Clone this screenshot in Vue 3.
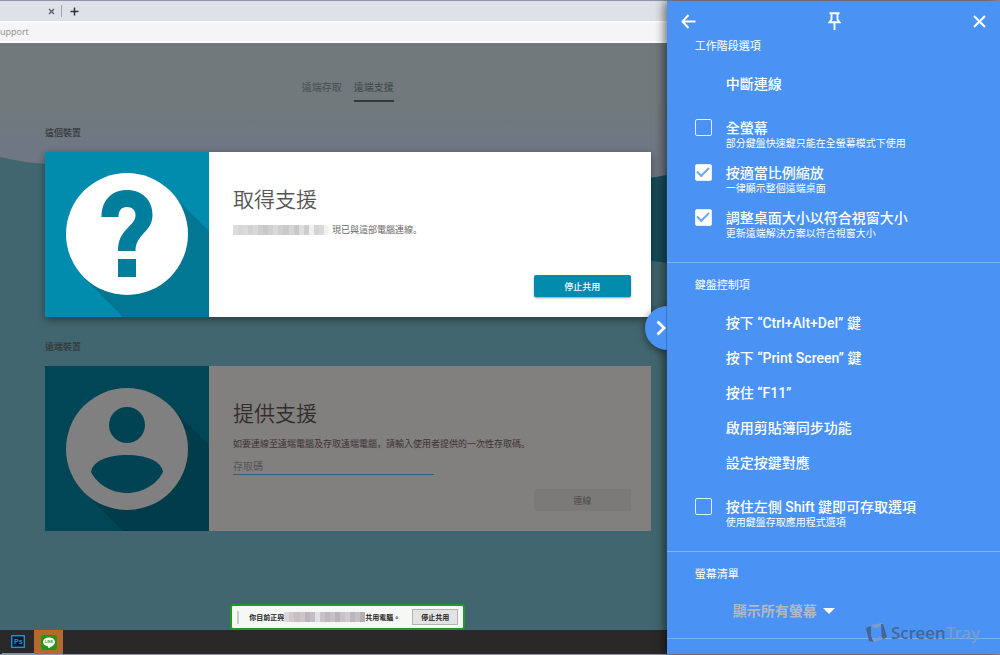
<script setup>
import { ref } from 'vue'

const accessCode = ref('')
const display = ref('all')

const viewOptions = ref([
  { id: 'fullscreen', title: '全螢幕', note: '部分鍵盤快速鍵只能在全螢幕模式下使用', checked: false },
  { id: 'scale', title: '按適當比例縮放', note: '一律顯示整個遠端桌面', checked: true },
  { id: 'resize', title: '調整桌面大小以符合視窗大小', note: '更新遠端解決方案以符合視窗大小', checked: true },
])

const keyOptions = ref([
  { id: 'shift', title: '按住左側 Shift 鍵即可存取選項', note: '使用鍵盤存取應用程式選項', checked: false },
])

const keyActions = [
  '按下 “Ctrl+Alt+Del” 鍵',
  '按下 “Print Screen” 鍵',
  '按住 “F11”',
  '啟用剪貼簿同步功能',
  '設定按鍵對應',
]

const emailTiles = ['#dcdcdc', '#d6d6d6', '#dadada', '#d2d2d2', '#d8d8d8', '#cecece', '#c9c9c9', '#d0d0d0', '#d9d9d9', '#cfcfcf', '#cacaca', '#d5d5d5', '#c8c8c8', '#dedede', '#cccccc', '#f0f0f0', '#d4d4d4', '#dadada', '#f2f2f2']
const hostTiles = ['#dad8da', '#cfc9cd', '#c8bfc3', '#cdc5c8', '#bcb6bb', '#c4bec2', '#e3e1e3', '#c9c1c7', '#bdb8be', '#c7c0c6', '#b9b4ba', '#c6c3c9', '#cfccd2', '#bab7bd', '#c4c1c6', '#b2afb4']
</script>

<template>
  <div class="screen">
    <div class="desktop">
      <div class="tabstrip">
        <button class="strip-btn" aria-label="關閉分頁">
          <svg width="7" height="7" viewBox="0 0 7 7"><path d="M1 1l5 5M6 1l-5 5" stroke="#55585e" stroke-width="1.2" /></svg>
        </button>
        <span class="strip-sep"></span>
        <button class="strip-btn" aria-label="新增分頁">
          <svg width="9" height="9" viewBox="0 0 9 9"><path d="M4.5 .5v8M.5 4.5h8" stroke="#2f3237" stroke-width="1.5" /></svg>
        </button>
      </div>
      <div class="addressbar">upport</div>

      <main class="page">
        <svg class="hills" viewBox="0 0 667 587" preserveAspectRatio="none" aria-hidden="true">
          <path d="M0 114C20 118 30 120 45 121L220 200L560 180L651 134H667V587H0Z" fill="#42666f" />
          <path d="M560 150L651 135L667 132V220C650 217 620 216 560 225Z" fill="#174c5a" />
        </svg>

        <nav class="tabs">
          <a href="#access">遠端存取</a>
          <a href="#support" class="current">遠端支援</a>
        </nav>

        <h2 class="label">這個裝置</h2>
        <section class="card">
          <svg class="art" viewBox="0 0 164 165" aria-hidden="true">
            <rect width="164" height="165" fill="#018bad" />
            <path d="M125 40L164 79V165H78L40 127Z" fill="#017793" />
            <circle cx="82" cy="82" r="61" fill="#fff" />
            <path d="M56.500 65C56.500 48 67 38 82 38C97 38 107.500 48 107.500 63C107.500 80 90.500 82 90.500 99H73C73 76 90.500 75 90.500 63C90.500 58 87 55 82 55C76 55 73.500 59 73.500 65Z" fill="#017e9c" />
            <rect x="73" y="107" width="18" height="18" fill="#017e9c" />
          </svg>
          <div class="body">
            <h3>取得支援</h3>
            <p><span class="tiles"><i v-for="(c, n) in emailTiles" :key="n" :style="{ background: c }"></i></span>現已與這部電腦連線。</p>
            <button class="action">停止共用</button>
          </div>
        </section>

        <h2 class="label">遠端裝置</h2>
        <section class="card dim">
          <svg class="art" viewBox="0 0 164 165" aria-hidden="true">
            <rect width="164" height="165" fill="#014657" />
            <path d="M125 40L164 79V165H78L40 127Z" fill="#013c4a" />
            <circle cx="82" cy="83" r="61" fill="#808080" />
            <circle cx="82" cy="59" r="18" fill="#014353" />
            <path d="M46 106C48 94 65 89 82 89C99 89 116 94 118 106C112 118 98 127 82 127C66 127 52 118 46 106Z" fill="#014353" />
          </svg>
          <div class="body">
            <h3>提供支援</h3>
            <p>如要連線至遠端電腦及存取遠端電腦，請輸入使用者提供的一次性存取碼。</p>
            <input v-model="accessCode" class="code" type="text" placeholder="存取碼" aria-label="存取碼" />
            <button class="action" disabled>連線</button>
          </div>
        </section>

        <div class="sharebar">
          <span class="grip"></span>
          <span class="share-text">你目前正與<span class="tiles small"><i v-for="(c, n) in hostTiles" :key="n" :style="{ background: c }"></i></span>共用電腦。</span>
          <button class="stop">停止共用</button>
        </div>
      </main>

      <footer class="taskbar">
        <button class="app" aria-label="Photoshop">
          <svg width="14" height="13" viewBox="0 0 14 13">
            <rect x=".7" y=".7" width="12.600" height="11.600" fill="#06182c" stroke="#2490cf" stroke-width="1.4" />
            <text x="3" y="9" font-size="7" font-weight="700" font-family="Liberation Sans, sans-serif" fill="#2490cf">Ps</text>
          </svg>
        </button>
        <button class="app active" aria-label="LINE">
          <svg width="16" height="15" viewBox="0 0 16 15">
            <rect width="16" height="15" rx="3" fill="#1c9a10" />
            <path d="M8 2.500C4.500 2.500 2 4.500 2 7C2 9.300 4.300 11 7.300 11.400V13.200C10.500 12 14 9.800 14 7C14 4.500 11.500 2.500 8 2.500Z" fill="#fff" />
            <text x="4" y="8.200" font-size="3.500" font-weight="700" font-family="Liberation Sans, sans-serif" fill="#1c9a10">LINE</text>
          </svg>
        </button>
      </footer>
    </div>

    <aside class="panel">
      <button class="toggle" aria-label="收合選項">
        <svg width="11" height="16" viewBox="0 0 11 16"><path d="M1.500 1.500L8 8L1.500 14.500" fill="none" stroke="#fff" stroke-width="2.800" /></svg>
      </button>

      <header class="panel-head">
        <button aria-label="返回">
          <svg width="15" height="15" viewBox="0 0 15 15"><path d="M7.500 1L1.500 7.500L7.500 14M1.500 7.500H14.500" fill="none" stroke="#fff" stroke-width="2" /></svg>
        </button>
        <button aria-label="固定">
          <svg width="13" height="18" viewBox="0 0 13 18"><path d="M1.500 1.200H11.500M3.500 1V7.500L1.500 10.300H11.500L9.500 7.500V1M6.500 10.500V18" fill="none" stroke="#fff" stroke-width="1.900" /></svg>
        </button>
        <button aria-label="關閉">
          <svg width="13" height="13" viewBox="0 0 13 13"><path d="M1 1L12 12M12 1L1 12" stroke="#fff" stroke-width="2.100" /></svg>
        </button>
      </header>

      <section class="group first">
        <h2>工作階段選項</h2>
        <button class="item">中斷連線</button>
        <div v-for="o in viewOptions" :key="o.id" class="option">
          <input :id="o.id" v-model="o.checked" type="checkbox" />
          <label :for="o.id">{{ o.title }}<small>{{ o.note }}</small></label>
        </div>
      </section>

      <section class="group">
        <h2>鍵盤控制項</h2>
        <button v-for="a in keyActions" :key="a" class="item">{{ a }}</button>
        <div v-for="o in keyOptions" :key="o.id" class="option">
          <input :id="o.id" v-model="o.checked" type="checkbox" />
          <label :for="o.id">{{ o.title }}<small>{{ o.note }}</small></label>
        </div>
      </section>

      <section class="group screens">
        <h2 id="screens-label">螢幕清單</h2>
        <div class="picker">
          <select v-model="display" aria-labelledby="screens-label">
            <option value="all">顯示所有螢幕</option>
          </select>
          <svg width="12" height="6" viewBox="0 0 12 6" aria-hidden="true"><path d="M0 0H12L6 6Z" fill="#fff" /></svg>
        </div>
      </section>

      <div class="watermark">
        <svg width="21" height="20" viewBox="0 0 21 20" aria-hidden="true">
          <path d="M0 5L5 3V13L8 19L3 18Z" fill="#46658f" />
          <path d="M5 2L16 0L18 3L8 5Z" fill="#7c9dc9" />
          <path d="M15 1L17 1L21 14L16 17Z" fill="#46658f" />
          <path d="M6 16L15 14L18 16L8 19Z" fill="#7c9dc9" />
        </svg>
        <span>Screen<b>Tray</b></span>
      </div>
    </aside>
  </div>
</template>

<style>
html, body { margin: 0; }
</style>

<style scoped>
* { box-sizing: border-box; }
.screen {
  display: flex;
  min-height: 100vh;
  border-top: 1px solid #8f96a8;
  border-bottom: 1px solid #8d97a6;
  font-family: Roboto, "Noto Sans CJK TC", sans-serif;
  background: #4a93f5;
}
button { border: 0; padding: 0; background: none; font: inherit; color: inherit; cursor: pointer; }
svg { display: block; }
h2, h3, p { margin: 0; font-weight: 400; }

.desktop { flex: 2; display: flex; flex-direction: column; min-width: 0; }
.tabstrip { display: flex; align-items: center; height: 20px; padding-left: 48px; background: #dfe1e9; }
.strip-sep { width: 1px; height: 12px; margin: 0 8px 0 6px; background: #a2a5ad; }
.addressbar {
  height: 22px;
  border-top: 2px solid #fff;
  border-bottom: 2px solid #fff;
  background: #f5f5f7;
  color: #8c8c8e;
  font: 9px/18px "Open Sans", sans-serif;
}
.page {
  position: relative;
  z-index: 0;
  flex: 1;
  display: flex;
  flex-direction: column;
  padding: 38px 16px 0 45px;
  background: linear-gradient(#71797c 0, #71797c 60px, #6f7782 100px);
}
.hills { position: absolute; inset: 0; width: 100%; height: 100%; z-index: -1; }
.tabs { display: flex; justify-content: center; gap: 12px; font-size: 10px; line-height: 14px; }
.tabs a { padding-bottom: 5px; border-bottom: 2px solid transparent; color: #484e51; text-decoration: none; }
.tabs .current { border-color: #30393d; color: #3e4548; }
.label { margin: 24px 0 12px; font-size: 9px; line-height: 14px; font-weight: 500; color: #33393c; }
.card + .label { margin-top: 23px; }

.card { display: flex; min-height: 165px; background: #fff; box-shadow: 0 3px 8px rgba(0, 0, 0, .4); }
.art { flex: none; width: 164px; height: 165px; }
.body { flex: 1; display: flex; flex-direction: column; padding: 34px 20px 20px 24px; }
.body h3 { font-size: 21px; line-height: 28px; font-weight: 350; color: #555; }
.body p {
  display: flex;
  align-items: center;
  margin-top: 9px;
  font: 9px/14px Roboto, "Noto Sans CJK JP", sans-serif;
  color: #666;
}
.tiles { display: inline-flex; width: 96px; height: 10px; margin-right: 3px; }
.tiles i { flex: 1; }
.action {
  align-self: flex-end;
  width: 97px;
  height: 22px;
  margin-top: auto;
  border-radius: 2px;
  background: #018bad;
  box-shadow: 0 1px 2px rgba(0, 0, 0, .4);
  color: #fff;
  font-size: 9px;
  font-weight: 500;
}
.dim { background: #827f7f; box-shadow: none; }
.dim h3 { color: #322c2c; }
.dim p { color: #3b3333; }
.dim .action { background: #7c7a79; box-shadow: none; color: #575252; }
.code {
  width: 201px;
  height: 17px;
  margin-top: 7px;
  padding: 0;
  border: 0;
  border-bottom: 1px solid #2e6570;
  outline: 0;
  background: none;
  color: #322c2c;
  font: 10px/16px Roboto, "Noto Sans CJK TC", sans-serif;
}
.code::placeholder { color: #585555; opacity: 1; }

.sharebar {
  display: flex;
  align-items: center;
  align-self: center;
  height: 26px;
  margin-top: auto;
  padding: 0 5px;
  border: 2px solid #1f9a28;
  border-radius: 3px;
  background: #f6f8f5;
  font-size: 7px;
  font-weight: 700;
  color: #222;
}
.grip { width: 2px; height: 13px; margin-right: 10px; background: #ccc; }
.share-text { display: flex; align-items: center; margin-right: 12px; }
.small { width: 81px; margin: 0; }
.stop { width: 46px; height: 16px; border: 1px solid #b4b4b4; background: #e3e3e3; font-weight: 700; }

.taskbar { display: flex; height: 24px; padding-left: 2px; background: #2a2828; }
.app { display: flex; align-items: center; justify-content: center; width: 32px; border-bottom: 1px solid #7a93a5; }
.active { width: 29px; background: #b46a2c; border: 0; }

.panel {
  position: relative;
  z-index: 1;
  flex: 1;
  min-width: 0;
  background: #4a93f5;
  box-shadow: -2px 0 10px rgba(0, 0, 0, .6);
  color: #fff;
}
.toggle {
  position: absolute;
  top: calc(50% - 22px);
  right: 100%;
  display: flex;
  align-items: center;
  justify-content: flex-end;
  width: 22px;
  height: 44px;
  border-radius: 22px 0 0 22px;
  background: #4a93f5;
  box-shadow: 0 2px 8px rgba(0, 0, 0, .5);
  clip-path: inset(-14px 0 -14px -14px);
}
.panel-head { display: flex; justify-content: space-between; align-items: center; height: 38px; padding: 2px 14px 0; }
.group { padding: 15px 20px 12px 28px; border-bottom: 1px solid #7db1f8; }
.first { padding-top: 0; }
.group h2 { margin-bottom: 10px; font-size: 11px; line-height: 16px; font-weight: 400; }
.item { display: block; height: 35px; padding-left: 31px; font-size: 14px; font-weight: 500; text-align: left; white-space: nowrap; }
.item + .option { margin-top: 15px; }
.option { display: flex; gap: 14px; height: 45px; padding-top: 4px; }
.option input {
  appearance: none;
  flex: none;
  display: grid;
  place-items: center;
  width: 17px;
  height: 17px;
  margin: 0;
  border: 1px solid #e4effe;
  border-radius: 2px;
}
.option input:checked { background: #fff; }
.option input:checked::after {
  content: "";
  width: 10px;
  height: 5px;
  margin-bottom: 4px;
  border: solid #6ba7f7;
  border-width: 0 0 2px 2px;
  transform: rotate(-45deg);
}
.option label { font-size: 14px; font-weight: 500; line-height: 18px; white-space: nowrap; }
.option small { display: block; font-size: 10px; font-weight: 400; line-height: 13px; }
.screens { padding-bottom: 15px; }
.screens h2 { margin-bottom: 16px; }
.picker { display: flex; align-items: center; gap: 6px; padding-left: 38px; }
.picker select {
  appearance: none;
  border: 0;
  padding: 0;
  background: none;
  color: #b3b8c2;
  font: 700 14px/24px Roboto, "Noto Sans CJK TC", sans-serif;
}
.watermark {
  position: absolute;
  right: 20px;
  bottom: 10px;
  display: flex;
  align-items: center;
  gap: 4px;
  color: #46658f;
  font: 500 17px/22px "Noto Sans", sans-serif;
}
.watermark b { font-weight: 500; color: #7c9dc9; }
</style>
